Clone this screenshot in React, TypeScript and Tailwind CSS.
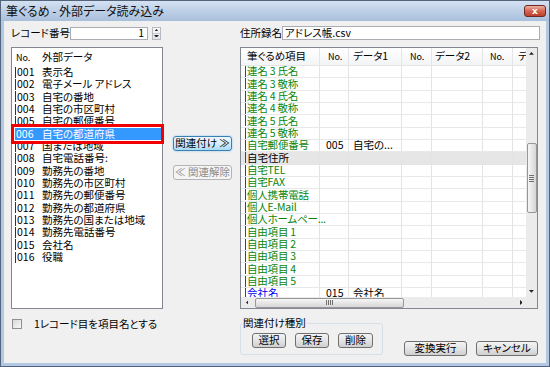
import React from "react";

const leftRows: [string, string][] = [
  ["001", "表示名"],
  ["002", "電子メール アドレス"],
  ["003", "自宅の番地"],
  ["004", "自宅の市区町村"],
  ["005", "自宅の郵便番号"],
  ["006", "自宅の都道府県"],
  ["007", "国または地域"],
  ["008", "自宅電話番号:"],
  ["009", "勤務先の番地"],
  ["010", "勤務先の市区町村"],
  ["011", "勤務先の郵便番号"],
  ["012", "勤務先の都道府県"],
  ["013", "勤務先の国または地域"],
  ["014", "勤務先電話番号"],
  ["015", "会社名"],
  ["016", "役職"],
];

type RRow = { name: string; c: "g" | "k" | "b"; no?: string; d1?: string; gray?: boolean };
const rightRows: RRow[] = [
  { name: "連名 3 氏名", c: "g" },
  { name: "連名 3 敬称", c: "g" },
  { name: "連名 4 氏名", c: "g" },
  { name: "連名 4 敬称", c: "g" },
  { name: "連名 5 氏名", c: "g" },
  { name: "連名 5 敬称", c: "g" },
  { name: "自宅郵便番号", c: "g", no: "005", d1: "自宅の..." },
  { name: "自宅住所", c: "k", gray: true },
  { name: "自宅TEL", c: "g" },
  { name: "自宅FAX", c: "g" },
  { name: "個人携帯電話", c: "g" },
  { name: "個人E-Mail", c: "g" },
  { name: "個人ホームペー...", c: "g" },
  { name: "自由項目 1", c: "g" },
  { name: "自由項目 2", c: "g" },
  { name: "自由項目 3", c: "g" },
  { name: "自由項目 4", c: "g" },
  { name: "自由項目 5", c: "g" },
  { name: "会社名", c: "b", no: "015", d1: "会社名" },
];

const vbtn =
  "h-[15px] rounded-[3px] border border-[#707070] bg-linear-to-b from-[#f4f4f4] via-[#e4e4e4] to-[#cfcfcf] flex items-center justify-center text-black leading-none";

function Tri({ dir }: { dir: "up" | "down" | "left" | "right" }) {
  const pts =
    dir === "up"
      ? "0,4 3.5,0 7,4"
      : dir === "down"
      ? "0,0 3.5,4 7,0"
      : dir === "left"
      ? "4,0 0,3.5 4,7"
      : "0,0 4,3.5 0,7";
  const w = dir === "up" || dir === "down" ? 7 : 4;
  const h = dir === "up" || dir === "down" ? 4 : 7;
  return (
    <svg width={w * 0.7} height={h * 0.7} viewBox={`0 0 ${w} ${h}`}>
      <polygon points={pts} fill="#222" />
    </svg>
  );
}

export default function App() {
  return (
    <div className="w-[550px] h-[367px] bg-[#b3c8e2] border border-[#53647b] flex flex-col font-['Noto_Sans_CJK_JP',sans-serif] [font-feature-settings:'palt'] text-[10.5px] text-black leading-none overflow-hidden">
      {/* Title bar */}
      <div className="h-[20px] flex items-center pl-[5px] pr-[3px] bg-linear-to-b from-[#d4e1f2] to-[#a8bfdc]">
        <span className="text-[12px] text-[#111]">筆ぐるめ - 外部データ読み込み</span>
        <div className="ml-auto w-[22px] h-[12px] rounded-[3px] border border-[#6e2a22] bg-linear-to-b from-[#ecb0a2] via-[#d4634f] to-[#bd412c] flex items-center justify-center text-white text-[9px] font-bold font-['DejaVu_Sans',sans-serif]">
          x
        </div>
      </div>

      {/* Client area */}
      <div className="flex-1 mx-[3px] mb-[3px] bg-[#f0f0f0] flex flex-col pl-[7px]">
        {/* Row 1 */}
        <div className="flex h-[14px] mt-[5px] items-center">
          <div className="w-[59px] whitespace-nowrap">レコード番号</div>
          <div className="w-[78px] h-[13px] bg-white border border-[#abadb3] flex items-center justify-end pr-[3px]">
            1
          </div>
          <div className="ml-[4px] w-[9px] h-[13px] flex flex-col border border-[#b5bac2] bg-linear-to-b from-[#fafafa] to-[#e2e2e2]">
            <div className="flex-1 flex items-center justify-center border-b border-[#c8ccd2]">
              <Tri dir="up" />
            </div>
            <div className="flex-1 flex items-center justify-center">
              <Tri dir="down" />
            </div>
          </div>
          <div className="ml-[79px] w-[42px] whitespace-nowrap">住所録名</div>
          <div className="flex-1 mr-[6px] h-[14px] bg-white border border-[#abadb3] flex items-center pl-[2px]">
            アドレス帳.csv
          </div>
        </div>

        {/* Main */}
        <div className="flex mt-[7px] h-[262px]">
          {/* Left list */}
          <div className="w-[152px] h-full bg-white border border-[#828790] flex flex-col">
            <div className="h-[18px] flex items-center pl-[3px] shrink-0">
              <span className="w-[27px] pl-[1px] text-[9px]">No.</span>
              <span>外部データ</span>
            </div>
            {leftRows.map(([no, name], i) =>
              i === 5 ? (
                <div key={no} className="relative h-[12.33px] shrink-0 ml-[3px] flex items-center bg-[#3399ff] text-white whitespace-nowrap">
                  <span className="w-[27px] pl-[1px]">{no}</span>
                  <span>{name}</span>
                  <div className="absolute -left-[4px] -right-[2px] -top-[4px] -bottom-[4px] border-[3px] border-[#f00000]" />
                </div>
              ) : (
                <div key={no} className="h-[12.33px] shrink-0 ml-[3px] flex items-center whitespace-nowrap">
                  <span className="w-[27px] h-[11px] border-l border-[#333] pl-[1px] flex items-center">{no}</span>
                  <span>{name}</span>
                </div>
              )
            )}
          </div>

          {/* Middle buttons */}
          <div className="w-[77px] flex flex-col pl-[10px]">
            <div className="mt-[89px] w-[59px] h-[15px] rounded-[3px] border border-[#3c7fb1] bg-linear-to-b from-[#eef8fe] via-[#d6eefc] to-[#a9daf6] flex items-center justify-center shadow-[0_0_2px_#7cc4ee] whitespace-nowrap">
              関連付け ≫
            </div>
            <div className="mt-[14px] w-[59px] h-[15px] rounded-[3px] border border-[#b1b5b8] bg-[#f4f4f4] text-[#8c8c8c] flex items-center justify-center whitespace-nowrap">
              ≪ 関連解除
            </div>
          </div>

          {/* Right grid */}
          <div className="w-[298px] h-full border border-[#828790] bg-white flex flex-col">
            <div className="flex flex-1 min-h-0">
              <div className="flex-1 flex flex-col overflow-hidden">
                <div className="h-[18px] shrink-0 flex bg-linear-to-b from-white to-[#f3f4f6] border-b border-[#e5e5e5] whitespace-nowrap">
                  <div className="w-[79px] shrink-0 border-r border-[#e3e5e8] flex items-center pl-[6px]">筆ぐるめ項目</div>
                  <div className="w-[29px] shrink-0 border-r border-[#e3e5e8] flex items-center pl-[8px] text-[9px]">No.</div>
                  <div className="w-[53px] shrink-0 border-r border-[#e3e5e8] flex items-center pl-[4px]">データ1</div>
                  <div className="w-[30px] shrink-0 border-r border-[#e3e5e8] flex items-center pl-[8px] text-[9px]">No.</div>
                  <div className="w-[51px] shrink-0 border-r border-[#e3e5e8] flex items-center pl-[3px]">データ2</div>
                  <div className="w-[30px] shrink-0 border-r border-[#e3e5e8] flex items-center pl-[7px] text-[9px]">No.</div>
                  <div className="flex-1 flex items-center pl-[5px] overflow-hidden">デ</div>
                </div>
                {rightRows.map((r, i) => (
                  <div
                    key={i}
                    className={
                      r.gray
                        ? "h-[12.33px] shrink-0 flex border-b border-[#e4e4e4] bg-[#e6e6e6] whitespace-nowrap"
                        : "h-[12.33px] shrink-0 flex border-b border-[#e8e8e8] whitespace-nowrap"
                    }
                  >
                    <div className="w-[79px] shrink-0 border-r border-[#e4e4e4] flex items-center pl-[4px]">
                      <span
                        className={
                          r.c === "g"
                            ? "h-[11px] border-l border-[#444] pl-[1px] flex items-center text-[#0a850a] tracking-[-0.2px]"
                            : r.c === "b"
                            ? "h-[11px] border-l border-[#444] pl-[1px] flex items-center text-[#0000ee]"
                            : "h-[11px] border-l border-[#444] pl-[1px] flex items-center text-black"
                        }
                      >
                        {r.name}
                      </span>
                    </div>
                    <div className="w-[29px] shrink-0 border-r border-[#e4e4e4] flex items-center pl-[6px]">{r.no ?? ""}</div>
                    <div className="w-[53px] shrink-0 border-r border-[#e4e4e4] flex items-center pl-[4px]">{r.d1 ?? ""}</div>
                    <div className="w-[30px] shrink-0 border-r border-[#e4e4e4]" />
                    <div className="w-[51px] shrink-0 border-r border-[#e4e4e4]" />
                    <div className="w-[30px] shrink-0 border-r border-[#e4e4e4]" />
                    <div className="flex-1" />
                  </div>
                ))}
              </div>
              {/* Vertical scrollbar */}
              <div className="w-[11px] shrink-0 bg-[#ebebeb] flex flex-col items-center">
                <div className="h-[11px] w-full flex items-center justify-center shrink-0">
                  <Tri dir="up" />
                </div>
                <div className="h-[84px] shrink-0" />
                <div className="w-[10px] h-[70px] shrink-0 rounded-[2px] border border-[#979797] bg-linear-to-r from-[#f6f6f6] to-[#d6d6d6] flex flex-col items-center justify-center gap-[1px]">
                  <div className="w-[5px] h-px bg-[#6f6f6f]" />
                  <div className="w-[5px] h-px bg-[#6f6f6f]" />
                  <div className="w-[5px] h-px bg-[#6f6f6f]" />
                  <div className="w-[5px] h-px bg-[#6f6f6f]" />
                </div>
                <div className="flex-1" />
                <div className="h-[11px] w-full flex items-center justify-center shrink-0">
                  <Tri dir="down" />
                </div>
              </div>
            </div>
            {/* Horizontal scrollbar */}
            <div className="flex h-[11px] shrink-0">
              <div className="flex-1 bg-[#ebebeb] flex items-center">
                <div className="w-[12px] h-full flex items-center justify-center shrink-0">
                  <Tri dir="left" />
                </div>
                <div className="ml-[2px] w-[149px] h-[10px] shrink-0 rounded-[2px] border border-[#979797] bg-linear-to-b from-[#f6f6f6] to-[#d6d6d6] flex items-center justify-center gap-[1px]">
                  <div className="w-px h-[5px] bg-[#6f6f6f]" />
                  <div className="w-px h-[5px] bg-[#6f6f6f]" />
                  <div className="w-px h-[5px] bg-[#6f6f6f]" />
                  <div className="w-px h-[5px] bg-[#6f6f6f]" />
                </div>
                <div className="flex-1" />
                <div className="w-[10px] h-full flex items-center justify-center shrink-0">
                  <Tri dir="right" />
                </div>
              </div>
              <div className="w-[11px] shrink-0 bg-[#ebebeb]" />
            </div>
          </div>
        </div>

        {/* Bottom */}
        <div className="flex flex-1">
          <div className="w-[229px] flex items-start pt-[10px] shrink-0">
            <div className="ml-[1px] w-[10px] h-[10px] border border-[#8e8f8f] bg-linear-to-br from-[#d8d8d8] to-[#f8f8f8]" />
            <span className="ml-[12px] leading-[10px] whitespace-nowrap">1レコード目を項目名とする</span>
          </div>
          <fieldset className="w-[143px] self-start mt-[8px] border border-[#d5dfe5] rounded-[3px] px-0 pb-[6px] shrink-0">
            <legend className="ml-[1px] px-[1px] leading-[12px] whitespace-nowrap">関連付け種別</legend>
            <div className="flex gap-[9px] mt-[4px] pl-[11px]">
              <div className={vbtn + " w-[34px]"}>選択</div>
              <div className={vbtn + " w-[34px]"}>保存</div>
              <div className={vbtn + " w-[35px]"}>削除</div>
            </div>
          </fieldset>
          <div className="flex gap-[9px] ml-[21px] mt-[32px] self-start">
            <div className={vbtn + " w-[63px]"}>変換実行</div>
            <div className={vbtn + " w-[62px] whitespace-nowrap"}>キャンセル</div>
          </div>
        </div>
      </div>
    </div>
  );
}
